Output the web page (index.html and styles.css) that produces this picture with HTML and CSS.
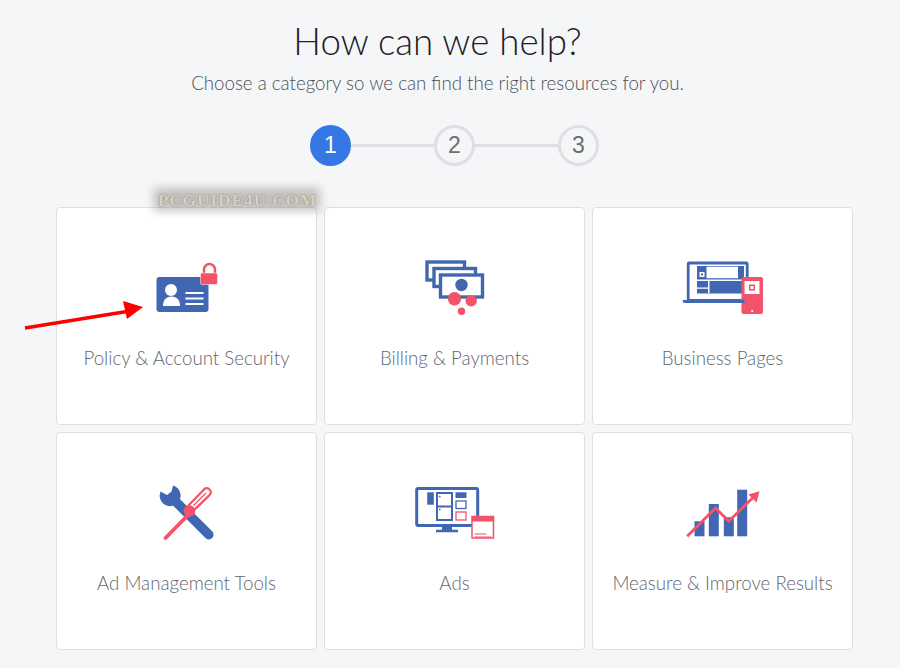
FILE: index.html
```html
<!DOCTYPE html>
<html lang="en">
<head>
    <meta charset="UTF-8">
    <meta name="viewport" content="width=device-width, initial-scale=1.0">
    <title>How can we help?</title>
    <link rel="stylesheet" href="styles.css">
</head>
<body>
    <div class="page">
        <div class="intro">
            <h1>How can we help?</h1>
            <p>Choose a category so we can find the right resources for you.</p>
        </div>

        <div class="steps">
            <span class="step active">1</span>
            <span class="step-line"></span>
            <span class="step">2</span>
            <span class="step-line"></span>
            <span class="step">3</span>
        </div>

        <div class="cards">
            <a class="card">
                <svg class="icon" viewBox="0 0 90 70">
                    <rect x="14.500" y="20" width="52" height="35" rx="3" fill="#4267b2"/>
                    <circle cx="29" cy="33" r="6" fill="#fff"/>
                    <path d="M21 49c0-6 3-9.500 8.500-9.500s8.500 3.500 8.500 9.500z" fill="#fff"/>
                    <path d="M43.500 36h18M43.500 41.500h18M43.500 47h18" stroke="#fff" stroke-width="1.800"/>
                    <path d="M62 17v-4.500a5.500 5.500 0 0 1 11 0V17" fill="none" stroke="#f35369" stroke-width="2.500"/>
                    <rect x="58.500" y="16" width="17" height="11.500" rx="1.500" fill="#f35369" stroke="#fff" stroke-width="0.500"/>
                </svg>
                <span class="label">Policy &amp; Account Security</span>
            </a>
            <a class="card">
                <svg class="icon" viewBox="0 0 90 70">
                    <rect x="17" y="5" width="37.500" height="18" fill="#fff" stroke="#4267b2" stroke-width="3.400"/>
                    <rect x="24" y="11.500" width="41.500" height="18" fill="#fff" stroke="#4267b2" stroke-width="3.400"/>
                    <rect x="30.500" y="18" width="42" height="22" fill="#fff" stroke="#4267b2" stroke-width="3.400"/>
                    <circle cx="51.500" cy="28" r="6.200" fill="#4267b2"/>
                    <circle cx="44.500" cy="41.700" r="6.700" fill="#f35369"/>
                    <circle cx="61.200" cy="43.700" r="5.700" fill="#f35369"/>
                    <circle cx="51.500" cy="54.300" r="3.700" fill="#f35369"/>
                </svg>
                <span class="label">Billing &amp; Payments</span>
            </a>
            <a class="card">
                <svg class="icon" viewBox="0 0 90 70">
                    <rect x="10.200" y="6" width="59" height="37.500" rx="1" fill="#fff" stroke="#4267b2" stroke-width="2.800"/>
                    <path d="M4.800 43h62.700v1.500q0 1.500-1.500 1.500H7q-2.200 0-2.200-1.500z" fill="#4267b2"/>
                    <rect x="19" y="9" width="47" height="31" fill="#4267b2"/>
                    <rect x="28.500" y="9.700" width="31.500" height="11.500" fill="#fff"/>
                    <rect x="21.500" y="15" width="5" height="5" fill="#fff"/>
                    <rect x="23" y="16.500" width="2" height="2" fill="#4267b2"/>
                    <path d="M19 22.500h47v1.500H19zM30 24v13h1.500V24zM19 30.500h11v1.300H19zM19 36.500h47V40H19z" fill="#fff"/>
                    <rect x="63.500" y="20" width="21.500" height="37" rx="2" fill="#f35369"/>
                    <rect x="66.500" y="24" width="15" height="13" fill="#fff"/>
                    <rect x="71" y="27.500" width="6" height="6" fill="#f35369"/>
                    <rect x="72.500" y="29" width="3" height="3" fill="#fff"/>
                    <circle cx="74.200" cy="54" r="1.100" fill="#fff"/>
                    <rect x="63.500" y="43" width="3" height="3" fill="#4267b2"/>
                </svg>
                <span class="label">Business Pages</span>
            </a>
            <a class="card">
                <svg class="icon" viewBox="0 0 90 70">
                    <path d="M33.500 19.300 66.800 52.700" stroke="#4267b2" stroke-width="9.500" stroke-linecap="round"/>
                    <path d="M18.500 9.500 25 13l4.500-3.500L31 3.500A10.500 10.500 0 1 1 18.500 9.500z" fill="#4267b2"/>
                    <path d="M23.500 56 47 32" stroke="#f35369" stroke-width="3.800" stroke-linecap="round"/>
                    <path d="M50 30 68 12.500a3.500 3.500 0 0 0-.5-5l-.5-.5a3.500 3.500 0 0 0-5 .5L45 25z" fill="#fff" stroke="#f35369" stroke-width="2.200"/>
                    <path d="M51.500 23.500 64 11M54.500 26.500 67 14" stroke="#f35369" stroke-width="1.300"/>
                    <circle cx="47.500" cy="29" r="5.800" fill="#f35369"/>
                </svg>
                <span class="label">Ad Management Tools</span>
            </a>
            <a class="card">
                <svg class="icon" viewBox="0 0 90 70">
                    <rect x="6.700" y="6.500" width="61" height="37" rx="1.500" fill="#fff" stroke="#4267b2" stroke-width="3"/>
                    <path d="M32 44h10v3.700h6v2.600H26v-2.600h6z" fill="#4267b2"/>
                    <rect x="17.200" y="10.300" width="6.600" height="12.400" fill="#4267b2"/>
                    <rect x="27" y="11" width="15" height="27" fill="#fff" stroke="#4267b2" stroke-width="2"/>
                    <path d="M27 24.500h15" stroke="#4267b2" stroke-width="2"/>
                    <path d="M29 14.500h1.500M29 27.500h1.500" stroke="#4267b2" stroke-width="1.500"/>
                    <rect x="45.500" y="10.300" width="11" height="5.700" fill="#4267b2"/>
                    <rect x="46" y="19" width="10" height="7.500" fill="#fff" stroke="#4267b2" stroke-width="1.300"/>
                    <rect x="46" y="30" width="10" height="8" fill="#fff" stroke="#f35369" stroke-width="1.300"/>
                    <rect x="62" y="34.500" width="21.500" height="21.500" fill="#fff" stroke="#f35369" stroke-width="1.500"/>
                    <rect x="62" y="34.500" width="21.500" height="5" fill="#f35369"/>
                    <path d="M64.500 52h12M64.500 55h17" stroke="#f35369" stroke-width="1.200"/>
                </svg>
                <span class="label">Ads</span>
            </a>
            <a class="card">
                <svg class="icon" viewBox="0 0 90 70">
                    <rect x="16.500" y="39.300" width="10" height="15" fill="#4267b2"/>
                    <rect x="30.800" y="22" width="10" height="32.300" fill="#4267b2"/>
                    <rect x="45.800" y="35.300" width="10" height="19" fill="#4267b2"/>
                    <rect x="59.200" y="7.700" width="10" height="46.600" fill="#4267b2"/>
                    <path d="M9.200 54.300 37.500 26l13.300 13.300L75 15.500" fill="none" stroke="#f35369" stroke-width="2.800"/>
                    <path d="M81.500 9.300 78.500 20.500 70.500 12.500z" fill="#f35369"/>
                </svg>
                <span class="label">Measure &amp; Improve Results</span>
            </a>
        </div>
    </div>

    <!-- overlays added on top of the screenshot -->
    <div class="stamp-bg"></div>
    <div class="stamp">PCGUIDE4U.COM</div>
    <svg class="arrow" viewBox="0 0 130 35">
        <path d="M5 28 110 11" stroke="#f00" stroke-width="3.500"/>
        <path d="M123 7 103 1 107 19z" fill="#f00"/>
    </svg>
</body>
</html>
```

FILE: styles.css
```css
body {
    background-color: #f5f6f8;
    font-family: Lato, sans-serif;
    margin: 0;
    padding: 0;
    height: 668px;
    overflow: hidden;
    position: relative;
}

.page {
    width: 797px;
    margin-left: 56px;
}

.intro {
    width: 763px;
    text-align: center;
    padding-top: 16px;
}

.intro h1 {
    font-size: 36.700px;
    font-weight: 300;
    line-height: 50px;
    margin: 0;
    color: #1d2129;
}

.intro p {
    font-size: 18.700px;
    font-weight: 300;
    line-height: 26px;
    margin: 4px 0 0;
    color: #4b4f56;
}

.steps {
    display: flex;
    align-items: center;
    justify-content: center;
    margin-top: 29px;
}

.step {
    width: 35px;
    height: 35px;
    border: 3px solid #dddfe2;
    border-radius: 50%;
    display: flex;
    align-items: center;
    justify-content: center;
    font-family: "Liberation Sans", sans-serif;
    font-size: 23px;
    color: #6d6e71;
}

.step.active {
    background-color: #3578e5;
    border-color: #3578e5;
    color: #fff;
}

.step-line {
    width: 83px;
    height: 3px;
    background-color: #dddfe2;
}

.cards {
    display: grid;
    grid-template-columns: repeat(3, 261px);
    grid-auto-rows: 218px;
    gap: 7px;
    margin-top: 41px;
}

.card {
    background-color: #fff;
    border: 1px solid #dddfe2;
    border-radius: 4px;
    box-sizing: border-box;
    display: flex;
    flex-direction: column;
    align-items: center;
    padding-top: 49px;
}

.icon {
    width: 90px;
    height: 70px;
}

.label {
    font-size: 18.700px;
    font-weight: 300;
    line-height: 26px;
    margin-top: 18px;
    color: #606770;
}

.stamp-bg {
    position: absolute;
    left: 154px;
    top: 188px;
    width: 166px;
    height: 23px;
    background-color: #8f8a84;
    filter: blur(5px);
    opacity: 0.5;
}

.stamp {
    position: absolute;
    left: 158px;
    top: 191px;
    font-family: "Liberation Serif", serif;
    font-weight: bold;
    font-size: 17px;
    line-height: 20px;
    letter-spacing: 1.100px;
    color: #d9cfc0;
    text-shadow: 0 0 2px #8a8378;
    filter: blur(0.5px);
}

.arrow {
    position: absolute;
    left: 20px;
    top: 300px;
    width: 130px;
    height: 35px;
}
```
